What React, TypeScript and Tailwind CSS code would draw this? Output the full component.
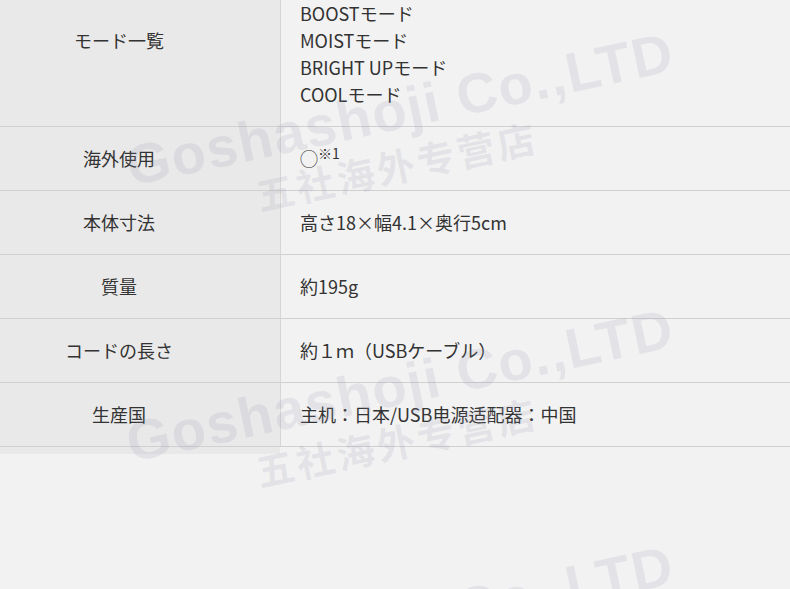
import React from 'react';

interface SpecRowProps {
  label: string;
  children: React.ReactNode;
}

const SpecRow: React.FC<SpecRowProps> = ({ label, children }) => (
  <div className="flex border-b border-[#d0d0d0]">
    <div className="flex w-[281px] shrink-0 items-center justify-center border-r border-[#d6d6d6] bg-[#e9e9e9] py-[18px] pr-[42px]">
      {label}
    </div>
    <div className="flex-1 py-[18px] pl-[19px]">{children}</div>
  </div>
);

// watermark sits over the table, so it is positioned absolutely
const Watermark: React.FC<{ className: string }> = ({ className }) => (
  <div
    className={`pointer-events-none absolute -translate-x-1/2 -translate-y-1/2 -rotate-12 whitespace-nowrap text-center font-bold text-[rgba(150,150,175,0.16)] ${className}`}
  >
    <div className="text-[56px] leading-[62px] tracking-[1.5px] [font-family:'Liberation_Sans',Arial,sans-serif]">
      Goshashoji Co.,LTD
    </div>
    <div className="mr-[30px] text-[38px] leading-[46px] tracking-[3px] [font-family:'Noto_Sans_CJK_SC',sans-serif]">
      五社海外专营店
    </div>
  </div>
);

const MODES = ['NORMALモード', 'BOOSTモード', 'MOISTモード', 'BRIGHT UPモード', 'COOLモード'];

export default function App() {
  return (
    <div className="relative h-screen overflow-hidden bg-[#f2f2f2] text-[18px] leading-[27px] text-[#333] [font-family:'Noto_Sans_CJK_JP',sans-serif]">
      <div className="-mt-[45px]">
        <SpecRow label="モード一覧">
          {MODES.map((m) => (
            <div key={m}>{m}</div>
          ))}
        </SpecRow>
        <SpecRow label="海外使用">
          <span>◯</span>
          <sup className="relative top-[1px] align-top text-[14px] leading-none">※1</sup>
        </SpecRow>
        <SpecRow label="本体寸法">高さ18×幅4.1×奥行5cm</SpecRow>
        <SpecRow label="質量">約195g</SpecRow>
        <SpecRow label="コードの長さ">約１ｍ（USBケーブル）</SpecRow>
        <SpecRow label="生産国">主机：日本/USB电源适配器：中国</SpecRow>
        <div className="h-[7px] w-[280px] bg-[#e9e9e9]" />
      </div>

      <Watermark className="left-[405px] top-[132px]" />
      <Watermark className="left-[405px] top-[408px]" />
      <Watermark className="left-[405px] top-[645px]" />
    </div>
  );
}
